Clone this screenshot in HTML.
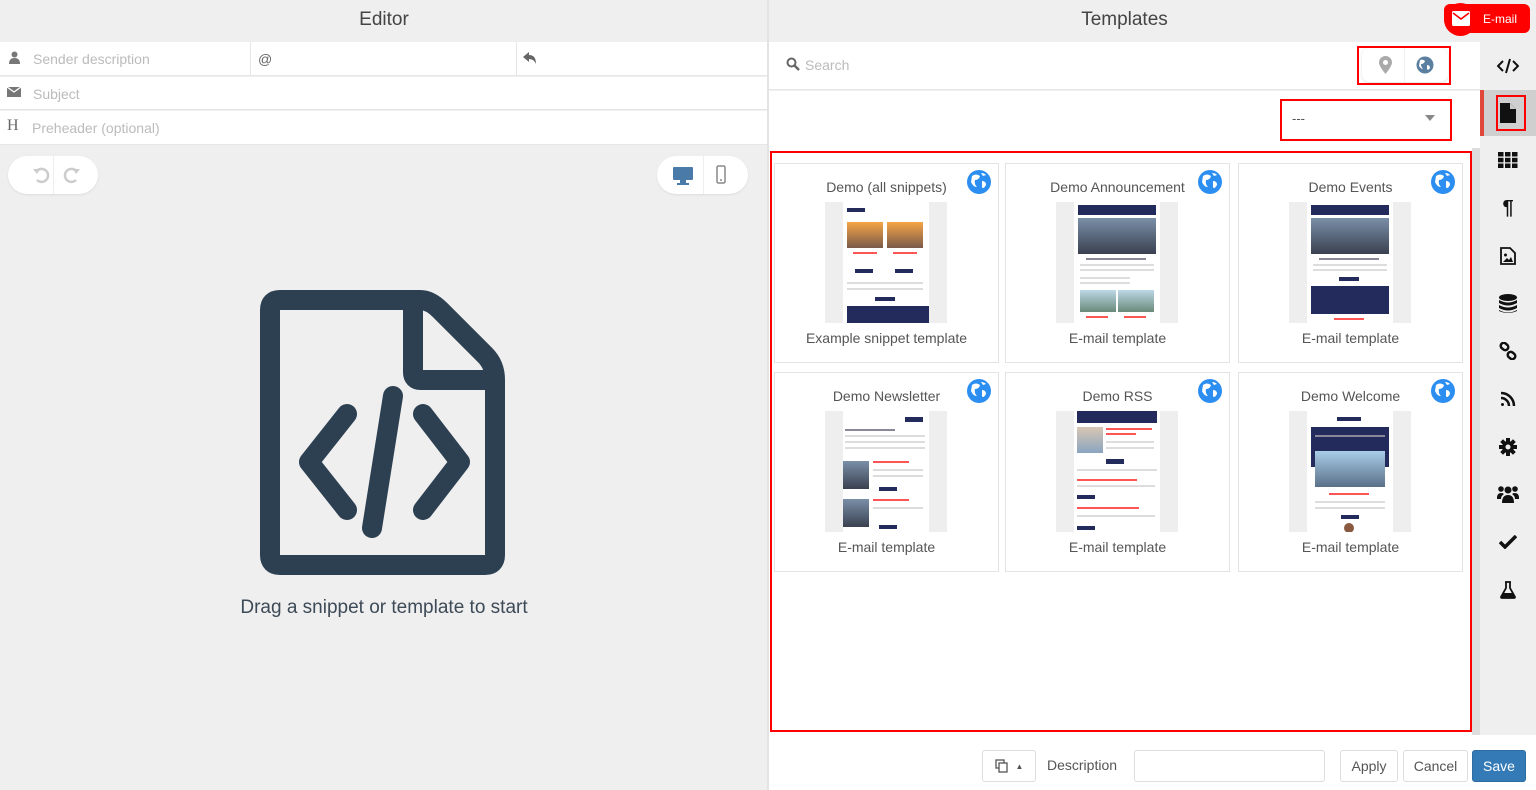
<!DOCTYPE html>
<html><head><meta charset="utf-8">
<style>
*{box-sizing:border-box;margin:0;padding:0}
body{width:1536px;height:790px;overflow:hidden;background:#efefef;font-family:"Liberation Sans","DejaVu Sans",sans-serif;color:#555;position:relative}
.abs{position:absolute}
.hdr{font-size:19px;color:#444;text-align:center;top:9px}
.row{position:absolute;left:0;width:767px;height:33px;background:#fff;border-bottom:1px solid #e6e6e6;font-size:14px;color:#bbb}
.row span{position:absolute;top:9px}
.pill{position:absolute;background:#fff;border-radius:20px;height:38px;box-shadow:0 1px 2px rgba(0,0,0,.08)}
.card{position:absolute;width:225px;height:200px;border:1px solid #e3e3e3;background:#fff;text-align:center}
.card .t{position:absolute;top:15px;left:0;right:0;font-size:14px;color:#555}
.card .b{position:absolute;top:166px;left:0;right:0;font-size:14px;color:#555}
.card .g{position:absolute;top:6px;right:7px}
.th{position:absolute;left:50px;top:38px;width:122px;height:121px;background:#eee;overflow:hidden}
.th .w{position:absolute;left:18px;width:86px;top:0;height:121px;background:#fff}
.nv{background:#232a5c;position:absolute}
.im{position:absolute;background:linear-gradient(#7a8fa8,#3a4150)}
.ln{position:absolute;height:2px;background:#ddd}
.rd{position:absolute;height:2px;background:#f55}
.side{position:absolute;left:1480px;width:56px;height:46px;display:flex;align-items:center;justify-content:center}
.btn{position:absolute;top:750px;height:32px;border:1px solid #ddd;border-radius:3px;background:#fff;font-size:14px;color:#555;display:flex;align-items:center;justify-content:center}
</style></head><body>
<!-- left panel -->
<div class="abs hdr" style="left:0;width:768px">Editor</div>
<div class="row" style="top:42px;height:34px"><svg class="abs" style="left:9px;top:9px" width="11" height="13" viewBox="0 0 11 13"><circle cx="5.5" cy="3.5" r="3" fill="#777"/><path d="M0 13 Q0 7 5.5 7 Q11 7 11 13Z" fill="#777"/></svg><span style="left:33px">Sender description</span>
<div class="abs" style="left:250px;top:0;width:1px;height:34px;background:#e6e6e6"></div><span style="left:258px;color:#666">@</span>
<div class="abs" style="left:516px;top:0;width:1px;height:34px;background:#e6e6e6"></div><svg class="abs" style="left:523px;top:10px" width="14" height="12" viewBox="0 0 14 12"><path d="M6 0 L0 5 L6 10 V7 Q11 7 13 12 Q13 3 6 3Z" fill="#666"/></svg></div>
<div class="row" style="top:77px"><svg class="abs" style="left:7px;top:10px" width="14" height="10" viewBox="0 0 14 10"><rect width="14" height="10" fill="#777"/><path d="M0 0 L7 5 L14 0" stroke="#fff" stroke-width="1.3" fill="none"/></svg><span style="left:33px">Subject</span></div>
<div class="row" style="top:111px;height:34px"><span style="left:7px;top:6px;font-family:'Liberation Serif',serif;font-size:16px;color:#666">H</span><span style="left:32px">Preheader (optional)</span></div>
<div class="pill" style="left:8px;top:156px;width:90px"><div class="abs" style="left:45px;top:0;width:1px;height:38px;background:#eee"></div>
<svg class="abs" style="left:24px;top:10px" width="18" height="18" viewBox="0 0 18 18"><path d="M4 6 A6.5 6.5 0 1 1 5 14" stroke="#ccc" stroke-width="2.5" fill="none"/><path d="M1 3 L5 8 L8 3Z" fill="#ccc"/></svg>
<svg class="abs" style="left:55px;top:10px" width="18" height="18" viewBox="0 0 18 18"><path d="M14 6 A6.5 6.5 0 1 0 13 14" stroke="#ccc" stroke-width="2.5" fill="none"/><path d="M17 3 L13 8 L10 3Z" fill="#ccc"/></svg></div>
<div class="pill" style="left:657px;top:156px;width:91px"><div class="abs" style="left:46px;top:0;width:1px;height:38px;background:#eee"></div>
<svg class="abs" style="left:15px;top:10px" width="22" height="19" viewBox="0 0 22 19"><rect x="1" y="1" width="20" height="13" rx="1" fill="#4a7aa8"/><rect x="8" y="14" width="6" height="3" fill="#4a7aa8"/><rect x="5" y="17" width="12" height="2" fill="#4a7aa8"/></svg>
<svg class="abs" style="left:59px;top:9px" width="10" height="19" viewBox="0 0 10 19"><rect x="1" y="1" width="8" height="17" rx="1.5" stroke="#888" stroke-width="1.5" fill="none"/><circle cx="5" cy="15" r="1" fill="#888"/></svg></div>
<svg class="abs" style="left:250px;top:280px" width="270" height="310" viewBox="0 0 270 310" fill="none" stroke="#2d4052" stroke-width="20" stroke-linejoin="round" stroke-linecap="round">
<path d="M20 30 Q20 20 30 20 H170 Q180 20 190 30 L235 75 Q245 85 245 100 V275 Q245 285 235 285 H30 Q20 285 20 275 Z"/>
<path d="M163 22 V92 Q163 100 171 100 H243"/>
<path d="M97 134 L59 182 L97 230"/><path d="M173 134 L210 182 L173 230"/><path d="M143 116 L122 248"/></svg>
<div class="abs" style="left:0;width:768px;top:597px;text-align:center;font-size:19px;color:#3d4a57">Drag a snippet or template to start</div>
<div class="abs" style="left:767px;top:0;width:2px;height:790px;background:#e3e3e3"></div>

<!-- right panel -->
<div class="abs hdr" style="left:769px;width:711px">Templates</div>
<div class="abs" style="left:1444px;top:4px;width:86px;height:29px;background:#f00;border-radius:6px 6px 6px 14px"></div>
<div class="abs" style="left:1444px;top:3px;width:33px;height:33px;background:#f00;border-radius:50%"></div>
<svg class="abs" style="left:1452px;top:11px" width="18" height="15" viewBox="0 0 18 15"><rect width="18" height="15" rx="1.5" fill="#fff"/><path d="M1 2 L9 8 L17 2" stroke="#f00" stroke-width="1.6" fill="none"/></svg>
<div class="abs" style="left:1483px;top:12px;font-size:12px;color:#fff">E-mail</div>

<div class="abs" style="left:769px;top:42px;width:711px;height:48px;background:#fff;border-bottom:1px solid #e6e6e6"></div>
<svg class="abs" style="left:786px;top:57px" width="14" height="14" viewBox="0 0 14 14"><circle cx="5.5" cy="5.5" r="4" stroke="#666" stroke-width="2" fill="none"/><path d="M8.5 8.5 L13 13" stroke="#666" stroke-width="2.5"/></svg>
<div class="abs" style="left:805px;top:57px;font-size:14px;color:#bbb">Search</div>
<div class="abs" style="left:1362px;top:48px;width:86px;height:34px;background:#fff;border-radius:8px;box-shadow:0 1px 3px rgba(0,0,0,.12)"></div>
<div class="abs" style="left:1404px;top:48px;width:1px;height:34px;background:#eee"></div>
<svg class="abs" style="left:1379px;top:56px" width="13" height="18" viewBox="0 0 13 18"><path d="M6.5 0 A6.5 6.5 0 0 1 13 6.5 Q13 10 6.5 18 Q0 10 0 6.5 A6.5 6.5 0 0 1 6.5 0Z" fill="#aaa"/><circle cx="6.5" cy="6.5" r="2.5" fill="#fff"/></svg>
<svg class="abs" style="left:1416px;top:56px" width="18" height="18" viewBox="0 0 18 18"><circle cx="9" cy="9" r="8.5" fill="#5a7fa0"/><path d="M4 4 Q7 3 9 5 Q8 8 5 8 Q5 11 7 13 Q5 13 3 10Z M11 9 Q14 9 14 12 Q12 15 11 13Z" fill="#fff"/></svg>
<div class="abs" style="left:1357px;top:46px;width:94px;height:39px;border:2px solid #f00"></div>
<div class="abs" style="left:769px;top:91px;width:711px;height:57px;background:#fff"></div>
<div class="abs" style="left:1280px;top:99px;width:172px;height:42px;border:2px solid #f00;background:#fff"></div>
<div class="abs" style="left:1292px;top:111px;font-size:13px;color:#555">---</div>
<div class="abs" style="left:1425px;top:115px;width:0;height:0;border-left:5px solid transparent;border-right:5px solid transparent;border-top:6px solid #888"></div>

<div class="abs" style="left:769px;top:148px;width:703px;height:587px;background:#fff"></div>
<div class="abs" style="left:1472px;top:148px;width:8px;height:587px;background:#ddd"></div>
<div class="abs" style="left:770px;top:151px;width:702px;height:581px;border:2px solid #f00"></div>

<div id="cards"></div>

<div class="abs" style="left:769px;top:735px;width:767px;height:55px;background:#fff"></div>
<div class="btn" style="left:982px;width:54px"><svg width="16" height="14" viewBox="0 0 16 14"><rect x="1" y="1" width="8" height="8" stroke="#555" stroke-width="1.3" fill="#fff"/><rect x="4" y="4" width="8" height="9" stroke="#555" stroke-width="1.3" fill="#fff"/></svg><span style="margin-left:5px;font-size:8px">▲</span></div>
<div class="abs" style="left:1047px;top:757px;font-size:14px;color:#555">Description</div>
<div class="btn" style="left:1134px;width:191px"></div>
<div class="btn" style="left:1340px;width:58px">Apply</div>
<div class="btn" style="left:1403px;width:65px">Cancel</div>
<div class="btn" style="left:1472px;width:54px;background:#337ab7;border-color:#2e6da4;color:#fff">Save</div>

<!-- sidebar -->
<div class="abs" style="left:1480px;top:90px;width:56px;height:46px;background:#cfcfcf"></div>
<div class="abs" style="left:1480px;top:90px;width:4px;height:46px;background:#e0463a"></div>
<div class="abs" style="left:1496px;top:95px;width:30px;height:36px;border:2px solid #f00"></div>
<div class="side" style="top:43px"><svg width="22" height="16" viewBox="0 0 22 16" fill="none" stroke="#111" stroke-width="2"><path d="M6 3 L1 8 L6 13 M16 3 L21 8 L16 13 M13 1 L9 15"/></svg></div>
<div class="side" style="top:90px"><svg width="16" height="20" viewBox="0 0 16 20"><path d="M0 0 H10 L16 6 V20 H0Z" fill="#111"/><path d="M10 0 V6 H16" fill="#ccc"/></svg></div>
<div class="side" style="top:137px"><svg width="20" height="16" viewBox="0 0 20 16" fill="#111"><rect x="0" y="0" width="5.5" height="4.5"/><rect x="7" y="0" width="5.5" height="4.5"/><rect x="14" y="0" width="5.5" height="4.5"/><rect x="0" y="5.8" width="5.5" height="4.5"/><rect x="7" y="5.8" width="5.5" height="4.5"/><rect x="14" y="5.8" width="5.5" height="4.5"/><rect x="0" y="11.5" width="5.5" height="4.5"/><rect x="7" y="11.5" width="5.5" height="4.5"/><rect x="14" y="11.5" width="5.5" height="4.5"/></svg></div>
<div class="side" style="top:185px;font-size:20px;font-weight:bold;color:#111">¶</div>
<div class="side" style="top:233px"><svg width="16" height="18" viewBox="0 0 16 18"><path d="M1 1 H10 L15 6 V17 H1Z" stroke="#111" stroke-width="1.8" fill="none"/><circle cx="5.5" cy="8" r="1.5" fill="#111"/><path d="M3 15 L7 11 L9 13 L11 10 L13 15Z" fill="#111"/></svg></div>
<div class="side" style="top:281px"><svg width="18" height="20" viewBox="0 0 18 20" fill="#111"><ellipse cx="9" cy="3.5" rx="9" ry="3.5"/><path d="M0 6 Q9 11 18 6 V9 Q9 14 0 9Z"/><path d="M0 11 Q9 16 18 11 V14 Q9 19 0 14Z"/><path d="M0 16 Q9 21 18 16 V17 Q9 21 0 17Z"/></svg></div>
<div class="side" style="top:328px"><svg width="18" height="18" viewBox="0 0 18 18" fill="none" stroke="#111" stroke-width="2.5"><rect x="1.5" y="1.5" width="8" height="6" rx="3" transform="rotate(40 5.5 4.5)"/><rect x="8.5" y="10.5" width="8" height="6" rx="3" transform="rotate(40 12.5 13.5)"/></svg></div>
<div class="side" style="top:376px"><svg width="16" height="16" viewBox="0 0 16 16" fill="none" stroke="#111" stroke-width="2.5"><circle cx="2.5" cy="13.5" r="1.5" fill="#111" stroke="none"/><path d="M1 7 A8 8 0 0 1 9 15 M1 2 A13 13 0 0 1 14 15"/></svg></div>
<div class="side" style="top:424px"><svg width="18" height="18" viewBox="0 0 18 18"><g fill="#111"><circle cx="9" cy="9" r="6"/><rect x="7" y="0" width="4" height="18"/><rect x="0" y="7" width="18" height="4"/><rect x="7" y="0" width="4" height="18" transform="rotate(45 9 9)"/><rect x="7" y="0" width="4" height="18" transform="rotate(-45 9 9)"/></g><circle cx="9" cy="9" r="2.5" fill="#efefef"/></svg></div>
<div class="side" style="top:471px"><svg width="22" height="18" viewBox="0 0 22 18" fill="#111"><circle cx="11" cy="5" r="3.5"/><circle cx="4" cy="4" r="2.8"/><circle cx="18" cy="4" r="2.8"/><path d="M5 18 Q5 10 11 10 Q17 10 17 18Z"/><path d="M0 13 Q0 8 4 8 Q6 8 7 9 Q4 11 4 14H0Z"/><path d="M22 13 Q22 8 18 8 Q16 8 15 9 Q18 11 18 14H22Z"/></svg></div>
<div class="side" style="top:519px"><svg width="18" height="14" viewBox="0 0 18 14"><path d="M1 7 L6 12 L17 1" stroke="#111" stroke-width="3.5" fill="none"/></svg></div>
<div class="side" style="top:567px"><svg width="16" height="18" viewBox="0 0 16 18"><path d="M5 1 H11 M6 1 V7 L1 16 Q1 17 2 17 H14 Q15 17 15 16 L10 7 V1" stroke="#111" stroke-width="1.8" fill="none"/><path d="M3.5 12 H12.5 L14.5 16.5 H1.5Z" fill="#111"/></svg></div>

<script>
var cards=[["Demo (all snippets)","Example snippet template",774,163,0],["Demo Announcement","E-mail template",1005,163,1],["Demo Events","E-mail template",1238,163,2],["Demo Newsletter","E-mail template",774,372,3],["Demo RSS","E-mail template",1005,372,4],["Demo Welcome","E-mail template",1238,372,5]];
var globe='<svg width="24" height="24" viewBox="0 0 24 24"><circle cx="12" cy="12" r="12" fill="#2b8ef0"/><path d="M5 6 Q9 3 13 6 Q12 10 8 10 Q7 14 10 17 Q6 17 4 12Z M15 11 Q19 11 19 15 Q16 20 15 17Z M14 3 Q17 3 19 5 L16 6Z" fill="#fff"/></svg>';
function th(k){
 var h='<div class="w"></div>';
 if(k==0){h+='<div class="nv" style="left:22px;top:6px;width:18px;height:4px"></div><div class="im" style="left:22px;top:20px;width:36px;height:26px;background:linear-gradient(#f6a545,#7a5a4a)"></div><div class="im" style="left:62px;top:20px;width:36px;height:26px;background:linear-gradient(#f6a545,#7a5a4a)"></div><div class="rd" style="left:28px;top:50px;width:24px"></div><div class="rd" style="left:68px;top:50px;width:24px"></div><div class="nv" style="left:30px;top:67px;width:18px;height:4px"></div><div class="nv" style="left:70px;top:67px;width:18px;height:4px"></div><div class="ln" style="left:22px;top:80px;width:76px"></div><div class="ln" style="left:22px;top:86px;width:76px"></div><div class="nv" style="left:50px;top:95px;width:20px;height:4px"></div><div class="nv" style="left:22px;top:104px;width:82px;height:17px"></div>';}
 else if(k==1||k==2){h+='<div class="nv" style="left:22px;top:3px;width:78px;height:10px"></div><div class="im" style="left:22px;top:16px;width:78px;height:36px"></div><div class="ln" style="left:30px;top:56px;width:60px;background:#889"></div><div class="ln" style="left:24px;top:62px;width:74px"></div><div class="ln" style="left:24px;top:67px;width:74px"></div>'+(k==1?'<div class="ln" style="left:24px;top:75px;width:50px"></div><div class="ln" style="left:24px;top:80px;width:50px"></div><div class="im" style="left:24px;top:88px;width:36px;height:22px;background:linear-gradient(#bcd8e8,#6a8a7a)"></div><div class="im" style="left:62px;top:88px;width:36px;height:22px;background:linear-gradient(#bcd8e8,#6a8a7a)"></div><div class="rd" style="left:30px;top:114px;width:22px"></div><div class="rd" style="left:68px;top:114px;width:22px"></div>':'<div class="nv" style="left:50px;top:75px;width:20px;height:4px"></div><div class="nv" style="left:22px;top:84px;width:78px;height:28px"></div><div class="rd" style="left:45px;top:116px;width:30px"></div>');}
 else if(k==3){h+='<div class="nv" style="left:80px;top:6px;width:18px;height:5px"></div><div class="ln" style="left:20px;top:18px;width:50px;background:#889"></div><div class="ln" style="left:20px;top:24px;width:80px"></div><div class="ln" style="left:20px;top:30px;width:80px"></div><div class="ln" style="left:20px;top:36px;width:80px"></div><div class="im" style="left:18px;top:50px;width:26px;height:28px"></div><div class="rd" style="left:48px;top:50px;width:36px"></div><div class="ln" style="left:48px;top:58px;width:50px"></div><div class="ln" style="left:48px;top:64px;width:50px"></div><div class="nv" style="left:54px;top:76px;width:18px;height:4px"></div><div class="im" style="left:18px;top:88px;width:26px;height:28px"></div><div class="rd" style="left:48px;top:88px;width:36px"></div><div class="ln" style="left:48px;top:96px;width:50px"></div><div class="nv" style="left:54px;top:114px;width:18px;height:4px"></div>';}
 else if(k==4){h+='<div class="nv" style="left:21px;top:0;width:80px;height:12px"></div><div class="im" style="left:21px;top:16px;width:26px;height:26px;background:linear-gradient(#d9c7b3,#8aa5c0)"></div><div class="rd" style="left:50px;top:17px;width:46px"></div><div class="rd" style="left:50px;top:22px;width:30px"></div><div class="ln" style="left:50px;top:30px;width:48px"></div><div class="ln" style="left:50px;top:36px;width:48px"></div><div class="nv" style="left:50px;top:48px;width:18px;height:5px"></div><div class="ln" style="left:21px;top:58px;width:80px"></div><div class="rd" style="left:21px;top:68px;width:60px"></div><div class="ln" style="left:21px;top:74px;width:78px"></div><div class="nv" style="left:21px;top:84px;width:18px;height:4px"></div><div class="rd" style="left:21px;top:96px;width:62px"></div><div class="ln" style="left:21px;top:104px;width:78px"></div><div class="nv" style="left:21px;top:115px;width:18px;height:4px"></div>';}
 else {h+='<div class="nv" style="left:48px;top:6px;width:24px;height:4px"></div><div class="nv" style="left:22px;top:16px;width:78px;height:40px"></div><div class="ln" style="left:26px;top:24px;width:70px;background:#889"></div><div class="im" style="left:26px;top:40px;width:70px;height:36px;background:linear-gradient(#a9cde8,#5a7088)"></div><div class="rd" style="left:40px;top:82px;width:40px"></div><div class="ln" style="left:26px;top:90px;width:70px"></div><div class="ln" style="left:26px;top:96px;width:70px"></div><div class="nv" style="left:52px;top:104px;width:18px;height:4px"></div><div style="position:absolute;left:55px;top:112px;width:10px;height:10px;border-radius:50%;background:#8a5a40"></div>';}
 return h;}
var s='';cards.forEach(function(c){s+='<div class="card" style="left:'+c[2]+'px;top:'+c[3]+'px"><div class="t">'+c[0]+'</div><div class="g">'+globe+'</div><div class="th">'+th(c[4])+'</div><div class="b">'+c[1]+'</div></div>';});
document.getElementById('cards').innerHTML=s;
</script>
</body></html>
